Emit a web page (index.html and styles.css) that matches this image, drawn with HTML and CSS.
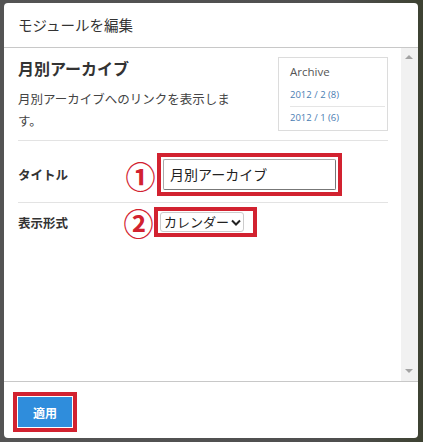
FILE: index.html
```html
<!DOCTYPE html>
<html lang="ja">
<head>
  <meta charset="UTF-8" />
  <title>モジュールを編集</title>
  <link rel="stylesheet" href="styles.css">
</head>
<body>
  <div class="modal">
    <div class="modal-head">モジュールを編集</div>
    <div class="modal-body">
      <div class="content">
        <div class="intro">
          <div class="intro-text">
            <h2>月別アーカイブ</h2>
            <p class="desc">月別アーカイブへのリンクを表示します。</p>
          </div>
          <div class="preview">
            <div class="preview-title">Archive</div>
            <div class="preview-item">2012 / 2 (8)</div>
            <div class="preview-item">2012 / 1 (6)</div>
          </div>
        </div>
        <div class="row row-title">
          <div class="label">タイトル</div>
          <div class="marker">①</div>
          <div class="mark-box">
            <div class="text-input">月別アーカイブ</div>
          </div>
        </div>
        <div class="row row-format">
          <div class="label">表示形式</div>
          <div class="marker">②</div>
          <div class="mark-box mark-select">
            <div class="select">カレンダー<svg width="10" height="7" viewBox="0 0 10 7"><path d="M1 1.5 L5 5.5 L9 1.5" fill="none" stroke="#222" stroke-width="2"/></svg></div>
          </div>
        </div>
      </div>
      <div class="scrollbar">
        <span class="arrow-up"></span>
        <span class="arrow-down"></span>
      </div>
    </div>
    <div class="modal-foot">
      <div class="mark-box mark-btn">
        <button class="apply-btn">適用</button>
      </div>
    </div>
  </div>
</body>
</html>
```

FILE: styles.css
```css
body {
  margin: 0;
  width: 423px;
  height: 442px;
  overflow: hidden;
  background: linear-gradient(90deg, #545454 0%, #4f4f4f 80%, #3d4232 100%);
  font-family: "Noto Sans CJK JP", "Noto Sans", sans-serif;
  color: #333;
}
.modal {
  margin: 3px 5px 0 4px;
  width: 414px;
  height: 435px;
  background: white;
  border-radius: 4px;
  display: flex;
  flex-direction: column;
  overflow: hidden;
}
.modal-head {
  height: 44px;
  line-height: 44px;
  padding-left: 14px;
  font-size: 14.5px;
  border-bottom: 1px solid #c8c8c8;
}
.modal-body {
  height: 333px;
  display: flex;
  border-bottom: 1px solid #c8c8c8;
}
.content {
  flex: 1;
  padding: 8px 13px 0 14px;
}
.intro {
  display: flex;
  justify-content: space-between;
  border-bottom: 1px solid #e3e3e3;
  height: 84px;
}
.intro h2 {
  margin: 0;
  font-size: 16px;
  line-height: 24px;
  font-weight: bold;
  color: #333;
}
.desc {
  margin: 8px 0 0;
  max-width: 222px;
  font-size: 12.5px;
  line-height: 22px;
  color: #444;
}
.preview {
  box-sizing: border-box;
  margin-top: 1px;
  width: 110px;
  height: 74px;
  border: 1px solid #dcdcdc;
  padding: 0 2px 0 11px;
  font-family: "Open Sans", "Liberation Sans", sans-serif;
}
.preview-title {
  font-size: 11.5px;
  color: #555;
  line-height: 16px;
  margin-top: 6px;
  padding-bottom: 4px;
}
.preview-item {
  font-size: 9.5px;
  color: #4a7db3;
  line-height: 22px;
}
.preview-item + .preview-item {
  border-top: 1px solid #e5e5e5;
}
.row {
  display: flex;
  align-items: center;
}
.row-title {
  padding: 12px 0 6px;
  border-bottom: 1px solid #e3e3e3;
}
.row-format {
  padding-top: 4px;
}
.label {
  width: 108px;
  font-size: 12.5px;
  font-weight: bold;
  color: #333;
}
.marker {
  width: 33px;
  text-align: center;
  font-size: 30px;
  line-height: 30px;
  font-weight: bold;
  color: #d22230;
  margin-left: -2px;
}
.row-format .marker {
  width: 31px;
  margin-left: -3px;
}
.mark-box {
  border: 4px solid #d22230;
  padding: 2px;
}
.text-input {
  width: 165px;
  height: 29px;
  line-height: 29px;
  border: 1px solid #aaa;
  border-right-color: #777;
  border-bottom-color: #777;
  border-radius: 2px;
  padding-left: 6px;
  font-size: 14px;
  color: #222;
}
.mark-select {
  padding: 1px 9px 1px 2px;
}
.select {
  height: 18px;
  line-height: 18px;
  padding: 0 2px 0 3px;
  border: 1px solid #ccc;
  border-radius: 3px;
  font-size: 13px;
  color: #222;
  display: flex;
  align-items: center;
  gap: 2px;
}
.scrollbar {
  width: 17px;
  background: #f1f1f1;
  position: relative;
}
.arrow-up, .arrow-down {
  position: absolute;
  left: 4px;
  width: 0;
  height: 0;
  border-left: 4px solid transparent;
  border-right: 4px solid transparent;
}
.arrow-up {
  top: 7px;
  border-bottom: 4px solid #a3a3a3;
}
.arrow-down {
  bottom: 8px;
  border-top: 4px solid #a3a3a3;
}
.modal-foot {
  flex: 1;
  padding: 10px 0 0 9px;
}
.mark-btn {
  display: inline-block;
  padding: 1px;
}
.apply-btn {
  display: block;
  width: 54px;
  height: 30px;
  border: none;
  background: #2f8ddc;
  color: white;
  font-family: "Noto Sans CJK JP", sans-serif;
  font-size: 12px;
  font-weight: bold;
}
```
